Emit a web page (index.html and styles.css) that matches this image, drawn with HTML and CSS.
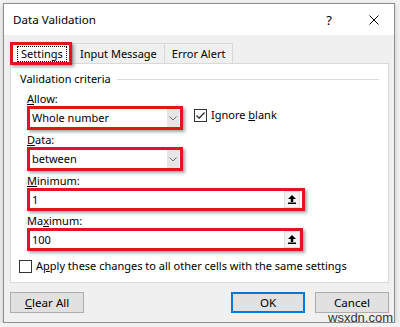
FILE: index.html
```html
<!DOCTYPE html>
<html lang="en">
<head>
  <meta charset="UTF-8">
  <title>Data Validation</title>
  <link rel="stylesheet" href="styles.css">
</head>
<body>

  <div class="dialog">
    <div class="titlebar">
      <span class="title">Data Validation</span>
      <span class="help">?</span>
      <svg class="close" width="10" height="10" viewBox="0 0 10 10">
        <path d="M0.5 0.5 L9.5 9.5 M9.5 0.5 L0.5 9.5" stroke="#000" stroke-width="1" fill="none"/>
      </svg>
    </div>

    <div class="body">
      <div class="tabs">
        <div class="tab active"><span class="focus">Settings</span></div>
        <div class="tab">Input Message</div>
        <div class="tab">Error Alert</div>
      </div>

      <div class="panel">
        <div class="group-title">
          <span>Validation criteria</span>
          <div class="rule"></div>
        </div>

        <div class="criteria">
          <div class="field-label first"><u>A</u>llow:</div>
          <div class="row">
            <div class="combo">
              <span class="val">Whole number</span>
              <span class="drop">
                <svg width="8" height="5" viewBox="0 0 8 5"><path d="M0.5 0.5 L4 4 L7.5 0.5" stroke="#6d6d6d" stroke-width="1" fill="none"/></svg>
              </span>
            </div>
            <label class="check ignore">
              <span class="box">
                <svg width="11" height="11" viewBox="0 0 11 11"><path d="M1.5 5.5 L4.2 8.2 L9.5 2.5" stroke="#222" stroke-width="1.2" fill="none"/></svg>
              </span>
              <span>Ignore <u>b</u>lank</span>
            </label>
          </div>

          <div class="field-label"><u>D</u>ata:</div>
          <div class="combo">
            <span class="val">between</span>
            <span class="drop">
              <svg width="8" height="5" viewBox="0 0 8 5"><path d="M0.5 0.5 L4 4 L7.5 0.5" stroke="#6d6d6d" stroke-width="1" fill="none"/></svg>
            </span>
          </div>

          <div class="field-label"><u>M</u>inimum:</div>
          <div class="text-input">
            <span class="val">1</span>
            <span class="pick">
              <svg width="8" height="9" viewBox="0 0 8 9"><path d="M0 4 L4 0 L8 4 Z M2.8 4 H5.2 V7 H2.8 Z M0 7.6 H8 V9 H0 Z" fill="#000"/></svg>
            </span>
          </div>

          <div class="field-label">Ma<u>x</u>imum:</div>
          <div class="text-input max">
            <span class="val">100</span>
            <span class="pick">
              <svg width="8" height="9" viewBox="0 0 8 9"><path d="M0 4 L4 0 L8 4 Z M2.8 4 H5.2 V7 H2.8 Z M0 7.6 H8 V9 H0 Z" fill="#000"/></svg>
            </span>
          </div>
        </div>

        <label class="check apply">
          <span class="box"></span>
          <span>A<u>p</u>ply these changes to all other cells with the same settings</span>
        </label>
      </div>

      <div class="buttons">
        <button class="btn clear"><u>C</u>lear All</button>
        <button class="btn ok">OK</button>
        <button class="btn">Cancel</button>
      </div>
    </div>
  </div>

  <div class="watermark">wsxdn.com</div>

</body>
</html>
```

FILE: styles.css
```css
body {
  margin: 0;
  background: #f2f2f2;
  font-family: "Noto Sans", sans-serif;
  font-size: 11px;
  color: #000;
}
.dialog {
  margin: 3px 0 0 3px;
  width: 390px;
  height: 318px;
  border: 1px solid #8e8e8e;
  background: #f0f0f0;
  display: flex;
  flex-direction: column;
  box-shadow: 0 2px 5px rgba(0,0,0,0.2);
}
.titlebar {
  height: 31px;
  flex: none;
  background: #fff;
  display: flex;
  align-items: center;
  padding-left: 9px;
  padding-right: 15px;
  font-size: 11.6px;
}
.help {
  margin-left: auto;
  margin-right: 37px;
  font-size: 13px;
}
.body {
  padding: 7px 5px 0 6px;
  display: flex;
  flex-direction: column;
}
.tabs {
  display: flex;
  align-items: flex-end;
}
.tab {
  height: 20px;
  box-sizing: border-box;
  border: 1px solid #d9d9d9;
  border-bottom: none;
  padding: 0 7px;
  line-height: 19px;
  margin-left: -1px;
}
.tab.active {
  width: 62px;
  height: 23px;
  margin: 0 1px -2px 0;
  padding: 1px 0 0 4px;
  border: 3px solid #e3141b;
  background: #fff;
  position: relative;
  z-index: 1;
  line-height: 14px;
  box-shadow: 2px 2px 3px rgba(0,0,0,0.35);
}
.focus {
  display: inline-block;
  width: 50px;
  box-sizing: border-box;
  border: 1px dotted #000;
  padding: 0 3px;
}
.panel {
  height: 220px;
  box-sizing: border-box;
  background: #fff;
  border: 1px solid #d9d9d9;
  padding: 8px 9px 0 9px;
}
.group-title {
  display: flex;
  align-items: center;
  gap: 6px;
  line-height: 14px;
}
.rule {
  flex: 1;
  height: 1px;
  background: #dcdcdc;
}
.criteria {
  padding-left: 7px;
}
.field-label {
  line-height: 14px;
  margin-top: 3px;
}
.field-label.first {
  margin-top: 6px;
}
.row {
  display: flex;
  align-items: flex-start;
}
.combo,
.text-input {
  height: 24px;
  box-sizing: border-box;
  border: 3px solid #e3141b;
  background: #fff;
  display: flex;
  box-shadow: 2px 2px 3px rgba(0,0,0,0.35);
}
.combo {
  width: 156px;
}
.text-input {
  width: 278px;
  height: 23px;
}
.text-input.max {
  width: 276px;
}
.val {
  flex: 1;
  padding-left: 2px;
  line-height: 17px;
}
.drop {
  width: 12px;
  margin-right: 1px;
  background: #e6e6e6;
  display: flex;
  align-items: center;
  justify-content: center;
}
.pick {
  width: 16px;
  margin-right: 2px;
  box-sizing: border-box;
  background: #f3f3f3;
  border: 1px solid #e1e1e1;
  display: flex;
  align-items: center;
  justify-content: center;
}
.text-input.max .pick {
  margin-right: 0;
}
.check {
  display: flex;
  align-items: center;
  gap: 4px;
  line-height: 14px;
}
.box {
  width: 13px;
  height: 13px;
  box-sizing: border-box;
  border: 1px solid #333;
  background: #fff;
  display: flex;
  align-items: center;
  justify-content: center;
}
.ignore {
  margin: 2px 0 0 11px;
}
.apply {
  margin: 8px 0 0 -1px;
}
.buttons {
  display: flex;
  gap: 10px;
  margin-top: 9px;
}
.btn {
  width: 74px;
  height: 21px;
  box-sizing: border-box;
  background: #e1e1e1;
  border: 1px solid #adadad;
  font-family: "Noto Sans", sans-serif;
  font-size: 11.6px;
  color: #000;
  padding: 0;
}
.btn.clear {
  margin-right: auto;
}
.btn.ok {
  border: 2px solid #0078d7;
}
.watermark {
  position: absolute;
  left: 328px;
  top: 310px;
  font-family: "Liberation Sans", sans-serif;
  font-size: 13px;
  color: #333;
}
```
